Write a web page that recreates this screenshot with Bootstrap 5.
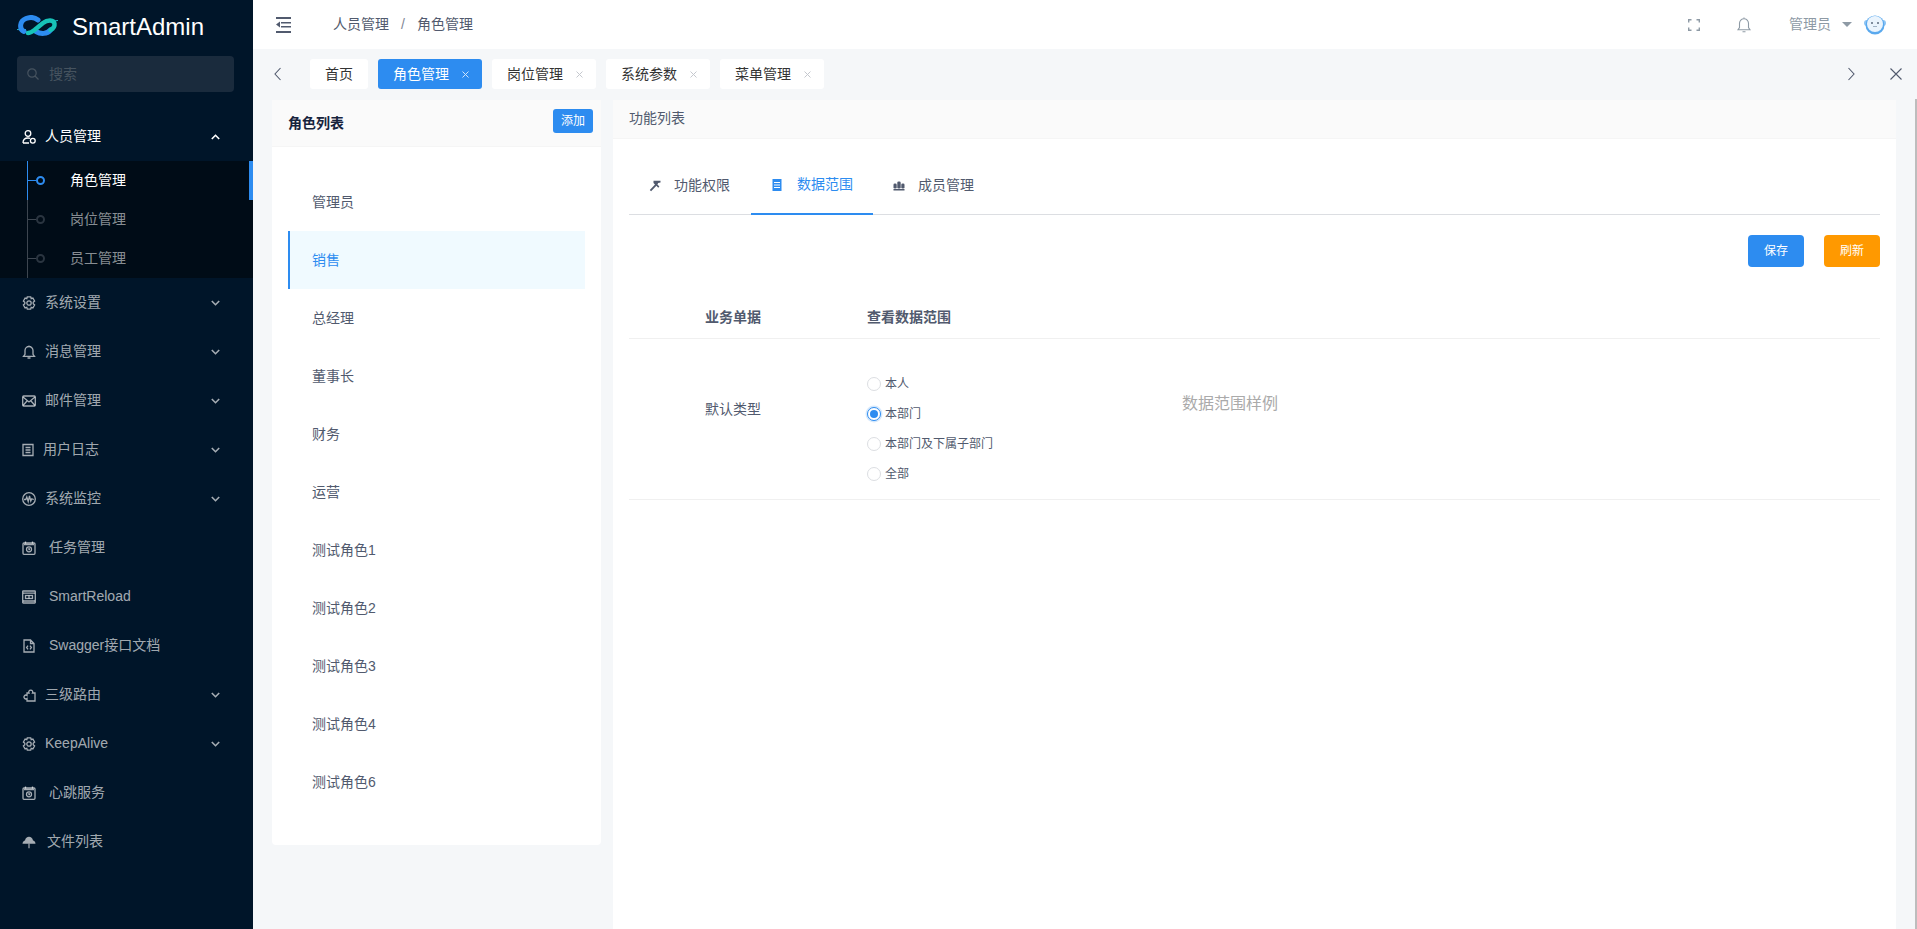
<!doctype html>
<html lang="zh-CN">
<head>
<meta charset="utf-8">
<title>SmartAdmin</title>
<link rel="stylesheet" href="https://cdn.jsdelivr.net/npm/bootstrap@5.3.0/dist/css/bootstrap.min.css">
<style>
html,body{height:100%;overflow:hidden}
body{font-family:"Liberation Sans","Noto Sans CJK SC",sans-serif;font-size:14px;color:#515a6e;background:#f5f7f9}
.app-shell{height:929px}
.side{width:253px;flex:none;background:#001529;color:rgba(255,255,255,.65)}
.brand{height:56px;padding:15px 0 0 17px;gap:14px;color:#fff;font-size:24px;line-height:24px}
.brand svg{width:41px;height:21px}
.side-search{margin:0 19px 0 17px;height:36px;background:#1a2b3d;border-radius:4px;padding-left:10px;gap:10px;color:#46535f}
.side-menu{margin-top:20px}
.mi{height:49px;padding:0 33px 0 22px;position:relative}
.mi svg.ic{width:14px;height:14px;flex:none;fill:none;stroke:currentColor;stroke-width:1.3}
.mi svg.ic.narrow{width:12px}
.mi svg.ic.solid{stroke:none;fill:currentColor}
.mi .lbl{margin-left:9px}
.mi .lbl.wide{margin-left:13px}
.mi .lbl.mid{margin-left:11px}
.mi .chev{margin-left:auto;width:9px;height:6px;fill:none;stroke:currentColor;stroke-width:1.6}
.mi.open{color:#fff}
.sub{background:#000c17}
.si{height:39px;position:relative;padding-left:70px;color:rgba(255,255,255,.55)}
.si::before{content:"";position:absolute;left:27px;top:0;bottom:0;width:1px;background:#3d4650}
.si::after{content:"";position:absolute;left:27px;top:19px;width:9px;height:1px;background:#3d4650}
.si .dot{position:absolute;left:36px;top:15px;width:9px;height:9px;border-radius:50%;border:2px solid #2a3540}
.si.on{color:#fff}
.si.on::before,.si.on::after{background:#2d8cf0}
.si.on .dot{border-color:#2d8cf0}
.si.on .mark-bar{position:absolute;right:0;top:0;bottom:0;width:4px;background:#2d8cf0}
.main-col{flex:1;min-width:0}
.topbar{height:49px;background:#fff;padding:0 31px 0 22px}
.collapse-ic{width:17px;height:18px;margin-right:41px}
.crumb-sep{margin:0 12px;color:#808695}
.top-ic{width:12px;height:12px;fill:none;stroke:#8e9aa5;stroke-width:1.4}
.bell-ic{width:14px;height:16px;margin-left:37px;fill:none;stroke:#8e9aa5;stroke-width:1.1}
.who{margin-left:38px;color:#8e9aa5}
.caret-ic{margin-left:11px;width:10px;height:5px;fill:#8e9aa5}
.face{margin-left:12px;width:22px;height:20px}
.tabbar{height:51px;padding-top:10px}
.arrow-cell{width:46px;height:30px;color:#515a6e;flex:none}
.arrow-cell.close-cell{width:43px}
.arrow-cell svg{width:12px;height:14px;fill:none;stroke:currentColor;stroke-width:1.1}
.arrow-cell.close-cell svg{height:12px}
.arrow-left{width:57px;padding-left:19px}
.tab-chip{height:30px;background:#fff;border-radius:3px;padding:0 13px 0 15px;margin-right:10px;color:#333;gap:13px}
.tab-chip.home{padding:0 15px}
.tab-chip.on{background:#2d8cf0;color:#fff}
.x-ic{width:7px;height:7px;fill:none;stroke:#c5c8ce;stroke-width:1}
.tab-chip.on .x-ic{stroke:#cfe4fb}
.workarea{flex:1;min-height:0;padding-left:19px;gap:12px;position:relative}
.role-card{width:329px;height:745px;background:#fff;border-radius:0 0 4px 4px;flex:none}
.role-head{height:47px;background:#fafafa;padding:0 8px 0 16px;border-bottom:1px solid #f5f5f5;color:#17233d;font-weight:700}
.add-btn{width:40px;height:24px;padding:0;font-size:12px;line-height:24px;border:0;border-radius:3px;background:#2d8cf0;color:#fff;font-weight:400;align-self:flex-start;margin-top:9px}
.role-body{padding:26px 16px 0 16px}
.role-row{height:58px;padding-left:24px}
.role-row.on{background:#f0faff;border-left:2px solid #2d8cf0;padding-left:22px;color:#2d8cf0}
.fn-card{width:1283px;background:#fff;flex:none}
.fn-head{height:39px;background:#fafafa;padding:0 0 2px 16px;border-bottom:1px solid #f5f5f5}
.fn-body{padding:0 16px}
.fn-tabs{height:76px;border-bottom:1px solid #dcdee2}
.fn-tab{width:122px;height:76px;padding:17px 0 0 20px;gap:13px;flex:none}
.fn-tab svg{width:12px;height:12px;flex:none}
.fn-tab.on{color:#2d8cf0;border-bottom:2px solid #2d8cf0}
.fn-tab.on svg{margin-right:1px}
.fn-actions{padding-top:20px;gap:20px;height:81px}
.act-btn{width:56px;height:32px;padding:0;border:0;border-radius:4px;font-size:12px;color:#fff;background:#2d8cf0}
.act-btn.warn{background:#f90}
.scope-head{height:43px;border-bottom:1px solid #f0f0f0;font-weight:700}
.col-a{width:238px;padding-left:76px;flex:none}
.col-b{width:315px;flex:none}
.scope-row{height:161px;border-bottom:1px solid #f0f0f0}
.scope-row .col-a{margin-top:-20px}
.pick{font-size:12px;height:30px;gap:4px}
.pick-wrap{margin-top:20px}
.ring{width:14px;height:14px;border-radius:50%;border:1px solid #dcdee2;background:#fff;flex:none}
.pick.on .ring{border-color:#2d8cf0;box-shadow:0 0 0 1.5px rgba(45,140,240,.2);position:relative}
.pick.on .ring::after{content:"";position:absolute;left:2px;top:2px;width:8px;height:8px;border-radius:50%;background:#2d8cf0}
.sample{font-size:16px;color:#aaa;margin-top:-31px}
.scroll-thumb{position:absolute;right:0;top:-1px;bottom:0;width:2px;background:#bdbdbd}
</style>
</head>
<body>
<div class="app-shell d-flex">
  <aside class="side d-flex flex-column">
    <div class="brand d-flex align-items-start">
      <svg viewBox="0 0 41 21" fill="none"><path d="M0 14.500c3 .5 6 .5 9 0" stroke="#1fb6c4"/><path d="M36 5.500c1.700.3 3.300.3 5 0" stroke="#1fb6c4"/><path d="M7 16.500C2 14 2.500 6 9 3.500c4-1.500 9-1 12 1.500" stroke="#2d8cf0" stroke-width="5" stroke-linecap="round"/><path d="M19 16.500c5 3 11 2.500 14.500-1.500" stroke="#2d8cf0" stroke-width="5" stroke-linecap="round"/><path d="M11 18c2.500 0 4.500-1.500 6.500-3l8.500-7c4.500-3.500 11-3.500 11.500 .8.300 2.500-1.500 5-4 6.200" stroke="#17c3b8" stroke-width="4.500" stroke-linecap="round"/></svg>
      <span>SmartAdmin</span>
    </div>
    <div class="side-search d-flex align-items-center">
      <svg width="12" height="12" viewBox="0 0 12 12" fill="none" stroke="#46535f" stroke-width="1.200"><circle cx="5" cy="5" r="4.200"/><path d="M8 8l3.500 3.500"/></svg>
      <span>搜索</span>
    </div>
    <nav class="side-menu">
      <div class="mi open d-flex align-items-center">
        <svg class="ic" viewBox="0 0 14 14"><circle cx="6" cy="3.500" r="2.800"/><path d="M1 13c0-3 2-5 5-5 .8 0 1.500.1 2 .4M1 13h6"/><circle cx="10.800" cy="10.800" r="2.400"/></svg>
        <span class="lbl">人员管理</span>
        <svg class="chev" viewBox="0 0 9 6"><path d="M.8 5L4.500 1.300 8.200 5"/></svg>
      </div>
      <div class="sub">
        <div class="si on d-flex align-items-center"><i class="dot"></i>角色管理<i class="mark-bar"></i></div>
        <div class="si d-flex align-items-center"><i class="dot"></i>岗位管理</div>
        <div class="si d-flex align-items-center"><i class="dot"></i>员工管理</div>
      </div>
      <div class="mi d-flex align-items-center">
        <svg class="ic" viewBox="0 0 14 14"><path d="M5.300.8h3.400l.5 1.900 1.700-.6 1.700 2.900-1.400 1.200v1.600l1.400 1.200-1.700 2.900-1.700-.6-.5 1.900H5.300l-.5-1.900-1.700.6-1.700-2.900 1.400-1.200V6.200L1.400 5l1.700-2.900 1.700.6z"/><circle cx="7" cy="7" r="2.200"/></svg>
        <span class="lbl">系统设置</span>
        <svg class="chev" viewBox="0 0 9 6"><path d="M.8 1L4.500 4.700 8.200 1"/></svg>
      </div>
      <div class="mi d-flex align-items-center">
        <svg class="ic" viewBox="0 0 14 14"><path d="M1.500 11.300h11l-1.500-2V5.500A4 4 0 0 0 3 5.500v3.800zM5.500 13h3M7 .5v1"/></svg>
        <span class="lbl">消息管理</span>
        <svg class="chev" viewBox="0 0 9 6"><path d="M.8 1L4.500 4.700 8.200 1"/></svg>
      </div>
      <div class="mi d-flex align-items-center">
        <svg class="ic" viewBox="0 0 14 14"><rect x=".7" y="2" width="12.600" height="10" rx="1"/><path d="M1 3l6 5 6-5M1 11.500l4-4.500M13 11.500L9 7"/></svg>
        <span class="lbl">邮件管理</span>
        <svg class="chev" viewBox="0 0 9 6"><path d="M.8 1L4.500 4.700 8.200 1"/></svg>
      </div>
      <div class="mi d-flex align-items-center">
        <svg class="ic narrow" viewBox="0 0 12 14"><path d="M1 1.500h10v11H1zM3.500 4.500h5M3.500 7h5M3.500 9.500h5"/></svg>
        <span class="lbl">用户日志</span>
        <svg class="chev" viewBox="0 0 9 6"><path d="M.8 1L4.500 4.700 8.200 1"/></svg>
      </div>
      <div class="mi d-flex align-items-center">
        <svg class="ic" viewBox="0 0 14 14"><circle cx="7" cy="7" r="6.300"/><path d="M2 7.500h1.800l1-2.500 1.400 4.500L7.500 4l1.300 5 1-2.200 2 .7"/></svg>
        <span class="lbl">系统监控</span>
        <svg class="chev" viewBox="0 0 9 6"><path d="M.8 1L4.500 4.700 8.200 1"/></svg>
      </div>
      <div class="mi d-flex align-items-center">
        <svg class="ic" viewBox="0 0 14 14"><rect x="1" y="2" width="12" height="11.300" rx="1"/><path d="M3.500.5v2M10.500.5v2M2 3.500h10"/><circle cx="7" cy="8.300" r="2.500"/><path d="M7 7v1.500h1"/></svg>
        <span class="lbl wide">任务管理</span>
      </div>
      <div class="mi d-flex align-items-center">
        <svg class="ic" viewBox="0 0 14 14"><rect x=".7" y="1" width="12.600" height="12" rx=".5"/><path d="M1 3.200h12M1 11h12"/><rect x="3.500" y="5.500" width="7" height="3"/><path d="M7 5.500v3"/></svg>
        <span class="lbl wide">SmartReload</span>
      </div>
      <div class="mi d-flex align-items-center">
        <svg class="ic" viewBox="0 0 14 14"><path d="M2 1h6.500L12 4.500V13H2zM8.500 1v3.500H12"/><path d="M6 6.700L4.600 8.500 6 10.300M8 6.700l1.400 1.800L8 10.300"/></svg>
        <span class="lbl wide">Swagger接口文档</span>
      </div>
      <div class="mi d-flex align-items-center">
        <svg class="ic" viewBox="0 0 14 14"><path d="M5 13v-2.500a1.900 1.900 0 1 1 0-3V5h2a2 2 0 1 1 3.500 0H13v8z"/></svg>
        <span class="lbl">三级路由</span>
        <svg class="chev" viewBox="0 0 9 6"><path d="M.8 1L4.500 4.700 8.200 1"/></svg>
      </div>
      <div class="mi d-flex align-items-center">
        <svg class="ic" viewBox="0 0 14 14"><path d="M5.300.8h3.400l.5 1.900 1.700-.6 1.700 2.900-1.400 1.200v1.600l1.400 1.200-1.700 2.900-1.700-.6-.5 1.900H5.300l-.5-1.900-1.700.6-1.700-2.900 1.400-1.200V6.200L1.400 5l1.700-2.900 1.700.6z"/><circle cx="7" cy="7" r="2.200"/></svg>
        <span class="lbl">KeepAlive</span>
        <svg class="chev" viewBox="0 0 9 6"><path d="M.8 1L4.500 4.700 8.200 1"/></svg>
      </div>
      <div class="mi d-flex align-items-center">
        <svg class="ic" viewBox="0 0 14 14"><rect x="1" y="2" width="12" height="11.300" rx="1"/><path d="M3.500.5v2M10.500.5v2M2 3.500h10"/><circle cx="7" cy="8.300" r="2.500"/><path d="M7 7v1.500h1"/></svg>
        <span class="lbl wide">心跳服务</span>
      </div>
      <div class="mi d-flex align-items-center">
        <svg class="ic solid" viewBox="0 0 14 14"><path d="M.5 8.800C.5 6.800 2 5.600 3 5.400 3.500 3 5 1.800 7 1.800s3.500 1.200 4 3.600c1.200.2 2.500 1.400 2.500 3.400z"/><path d="M6.400 8.800h1.200v4.400H6.400z"/></svg>
        <span class="lbl mid">文件列表</span>
      </div>
    </nav>
  </aside>

  <div class="main-col d-flex flex-column">
    <header class="topbar d-flex align-items-center">
      <svg class="collapse-ic" viewBox="0 0 17 18" fill="#515a6e"><rect x="1" y="1" width="15" height="2"/><rect x="6" y="6" width="10" height="1.500"/><rect x="6" y="10" width="10" height="1.500"/><rect x="1" y="15" width="15" height="2"/><path d="M5 5.500v6L1 8.500z"/></svg>
      <span>人员管理</span><span class="crumb-sep">/</span><span>角色管理</span>
      <span class="ms-auto d-flex align-items-center">
        <svg class="top-ic" viewBox="0 0 12 12"><path d="M.7 3.500V.7h2.800M8.500.7h2.800v2.800M11.300 8.500v2.800H8.500M3.500 11.300H.7V8.500"/></svg>
        <svg class="bell-ic" viewBox="0 0 14 16"><path d="M1 12.800h12l-1.500-2.300V6.200a4.500 4.500 0 0 0-9 0v4.300zM5.500 14.800h3M7 .5v1.200"/></svg>
        <span class="who">管理员</span>
        <svg class="caret-ic" viewBox="0 0 10 5"><path d="M0 0h10L5 5z"/></svg>
        <svg class="face" viewBox="0 0 22 20"><circle cx="3" cy="8" r="3" fill="#8ec5f5"/><circle cx="19" cy="8" r="3" fill="#8ec5f5"/><circle cx="11" cy="10" r="9.500" fill="#5aa9ee"/><circle cx="11" cy="9" r="8" fill="#eaf4fd"/><circle cx="8" cy="8" r="1" fill="#5b6b7c"/><circle cx="14" cy="8" r="1" fill="#5b6b7c"/><path d="M9 11.500h4" stroke="#9fb2c4" stroke-width="1"/></svg>
      </span>
    </header>

    <div class="tabbar d-flex">
      <div class="arrow-cell arrow-left d-flex align-items-center"><svg viewBox="0 0 12 14"><path d="M8.500 1L3 7l5.500 6"/></svg></div>
      <div class="tab-chip home d-flex align-items-center">首页</div>
      <div class="tab-chip on d-flex align-items-center">角色管理<svg class="x-ic" viewBox="0 0 7 7"><path d="M.5.500l6 6M6.500.500l-6 6"/></svg></div>
      <div class="tab-chip d-flex align-items-center">岗位管理<svg class="x-ic" viewBox="0 0 7 7"><path d="M.5.500l6 6M6.500.500l-6 6"/></svg></div>
      <div class="tab-chip d-flex align-items-center">系统参数<svg class="x-ic" viewBox="0 0 7 7"><path d="M.5.500l6 6M6.500.500l-6 6"/></svg></div>
      <div class="tab-chip d-flex align-items-center">菜单管理<svg class="x-ic" viewBox="0 0 7 7"><path d="M.5.500l6 6M6.500.500l-6 6"/></svg></div>
      <div class="arrow-cell d-flex align-items-center justify-content-center ms-auto"><svg viewBox="0 0 12 14"><path d="M3.500 1L9 7l-5.500 6"/></svg></div>
      <div class="arrow-cell close-cell d-flex align-items-center justify-content-center"><svg viewBox="0 0 12 12"><path d="M.5.500l11 11M11.500.500l-11 11"/></svg></div>
    </div>

    <div class="workarea d-flex align-items-start">
      <section class="role-card">
        <div class="role-head d-flex align-items-center justify-content-between"><span>角色列表</span><button class="add-btn" type="button">添加</button></div>
        <div class="role-body">
          <div class="role-row d-flex align-items-center">管理员</div>
          <div class="role-row on d-flex align-items-center">销售</div>
          <div class="role-row d-flex align-items-center">总经理</div>
          <div class="role-row d-flex align-items-center">董事长</div>
          <div class="role-row d-flex align-items-center">财务</div>
          <div class="role-row d-flex align-items-center">运营</div>
          <div class="role-row d-flex align-items-center">测试角色1</div>
          <div class="role-row d-flex align-items-center">测试角色2</div>
          <div class="role-row d-flex align-items-center">测试角色3</div>
          <div class="role-row d-flex align-items-center">测试角色4</div>
          <div class="role-row d-flex align-items-center">测试角色6</div>
        </div>
      </section>
      <section class="fn-card h-100">
        <div class="fn-head d-flex align-items-center">功能列表</div>
        <div class="fn-body">
          <div class="fn-tabs d-flex">
            <div class="fn-tab d-flex align-items-center"><svg viewBox="0 0 12 12" fill="#515a6e"><path d="M4.500.8h7v1.700l-2.300.4-.8 1.600 2 2-1.200 1.200-1.800-1.900-5.300 5.400-1.300-1.300L6 4.600 4.500 3z"/></svg>功能权限</div>
            <div class="fn-tab on d-flex align-items-center"><svg viewBox="0 0 12 12"><rect x="1.500" width="9" height="12" fill="#2d8cf0"/><path d="M3 3.500h6M3 6h6M3 8.500h6" stroke="#fff"/></svg>数据范围</div>
            <div class="fn-tab d-flex align-items-center"><svg viewBox="0 0 12 12" fill="#515a6e"><rect x="4.300" y="1.500" width="3.400" height="7" rx="1.300"/><rect x=".5" y="3.500" width="3.200" height="5" rx="1.300"/><rect x="8.300" y="3.500" width="3.200" height="5" rx="1.300"/><rect x=".5" y="9" width="11" height="1.500"/></svg>成员管理</div>
          </div>
          <div class="fn-actions d-flex justify-content-end align-items-start">
            <button class="act-btn" type="button">保存</button>
            <button class="act-btn warn" type="button">刷新</button>
          </div>
          <div class="scope-head d-flex align-items-center">
            <div class="col-a">业务单据</div><div class="col-b">查看数据范围</div>
          </div>
          <div class="scope-row d-flex align-items-center">
            <div class="col-a">默认类型</div>
            <div class="col-b pick-wrap">
              <div class="pick d-flex align-items-center"><i class="ring"></i>本人</div>
              <div class="pick on d-flex align-items-center"><i class="ring"></i>本部门</div>
              <div class="pick d-flex align-items-center"><i class="ring"></i>本部门及下属子部门</div>
              <div class="pick d-flex align-items-center"><i class="ring"></i>全部</div>
            </div>
            <div class="sample">数据范围样例</div>
          </div>
        </div>
      </section>
      <div class="scroll-thumb"></div>
    </div>
  </div>
</div>
<script src="https://cdn.jsdelivr.net/npm/bootstrap@5.3.0/dist/js/bootstrap.bundle.min.js"></script>
</body>
</html>
